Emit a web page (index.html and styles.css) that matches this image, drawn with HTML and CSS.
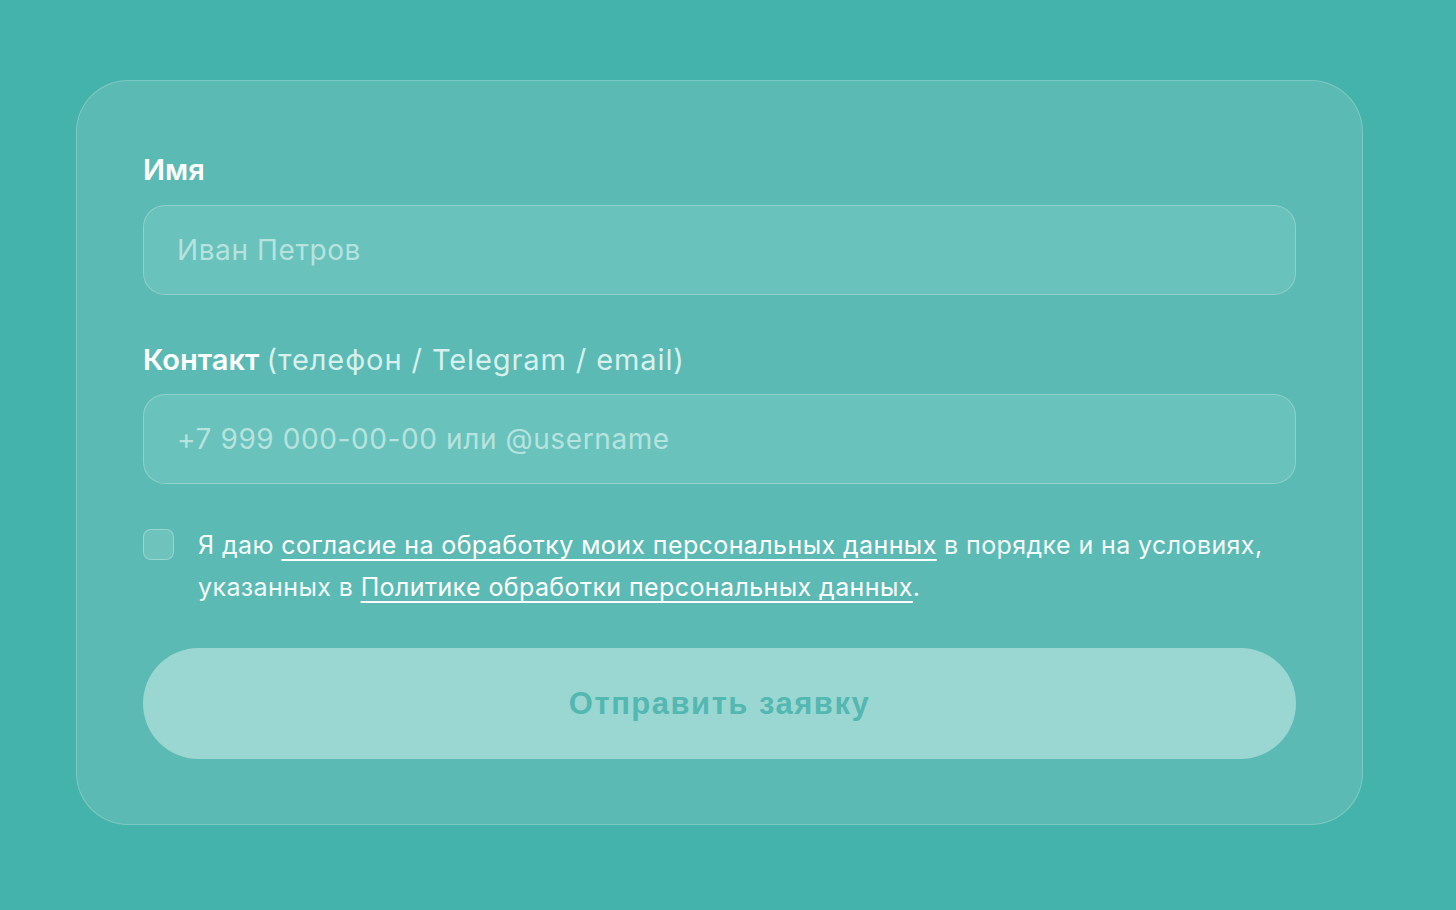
FILE: index.html
```html
<!DOCTYPE html>
<html lang="ru">
<head>
<meta charset="utf-8">
<title>Заявка</title>
<link rel="stylesheet" href="styles.css">
</head>
<body>
<form class="card">
  <label class="label" for="name">Имя</label>
  <input class="field" id="name" type="text" placeholder="Иван Петров">
  <label class="label label-second" for="contact">Контакт <span class="hint">(телефон / Telegram / email)</span></label>
  <input class="field" id="contact" type="text" placeholder="+7 999 000-00-00 или @username">
  <div class="consent">
    <span class="check"></span>
    <p class="consent-text">Я даю <a href="#">согласие на обработку моих персональных данных</a> в порядке и на условиях, указанных в <a href="#">Политике обработки персональных данных</a>.</p>
  </div>
  <button class="submit" type="button">Отправить заявку</button>
</form>
</body>
</html>
```
FILE: styles.css
```css
html, body {
  margin: 0;
  padding: 0;
  background: #44b3ab;
  height: 100%;
}
body {
  padding: 80px 0 0 76px;
  box-sizing: border-box;
  font-family: Inter, "Liberation Sans", sans-serif;
}
.card {
  width: 1287px;
  box-sizing: border-box;
  padding: 69px 66px 65px;
  background: #5bbab4;
  border: 1.5px solid rgba(255, 255, 255, 0.22);
  border-radius: 52px;
  display: flex;
  flex-direction: column;
}
.label {
  font-family: Inter, "Noto Sans", sans-serif;
  font-weight: 600;
  font-size: 29px;
  line-height: 40px;
  color: #ffffff;
  margin-bottom: 15px;
}
.label-second {
  margin-top: 45px;
  margin-bottom: 14px;
}
.hint {
  font-family: Inter, sans-serif;
  font-weight: 400;
  font-size: 29px;
  letter-spacing: 0.9px;
  color: #d6f0ee;
}
.field {
  height: 90px;
  box-sizing: border-box;
  background: #69c2bc;
  border: 1.5px solid rgba(255, 255, 255, 0.25);
  border-radius: 22px;
  padding: 0 33px;
  font-family: Inter, sans-serif;
  font-size: 28px;
  letter-spacing: 0.6px;
  color: #ffffff;
  outline: none;
}
.field::placeholder {
  color: #b6e3df;
}
.consent {
  margin-top: 40px;
  display: flex;
  align-items: flex-start;
  gap: 24px;
}
.check {
  flex: none;
  width: 31px;
  height: 31px;
  box-sizing: border-box;
  margin-top: 5px;
  border-radius: 8px;
  background: #6ec3bd;
  border: 1.5px solid rgba(255, 255, 255, 0.3);
}
.consent-text {
  margin: 0;
  font-size: 25px;
  letter-spacing: 0.4px;
  line-height: 42px;
  color: #f2fbfa;
}
.consent-text a {
  color: #ffffff;
  text-decoration: underline;
  text-underline-offset: 5px;
  text-decoration-thickness: 1.5px;
}
.submit {
  margin-top: 40px;
  height: 111px;
  border: none;
  border-radius: 56px;
  background: #9bd7d2;
  color: #52b8b1;
  font-family: "Liberation Sans", Arial, sans-serif;
  font-weight: 700;
  font-size: 31px;
  letter-spacing: 1.5px;
  cursor: pointer;
}
```
